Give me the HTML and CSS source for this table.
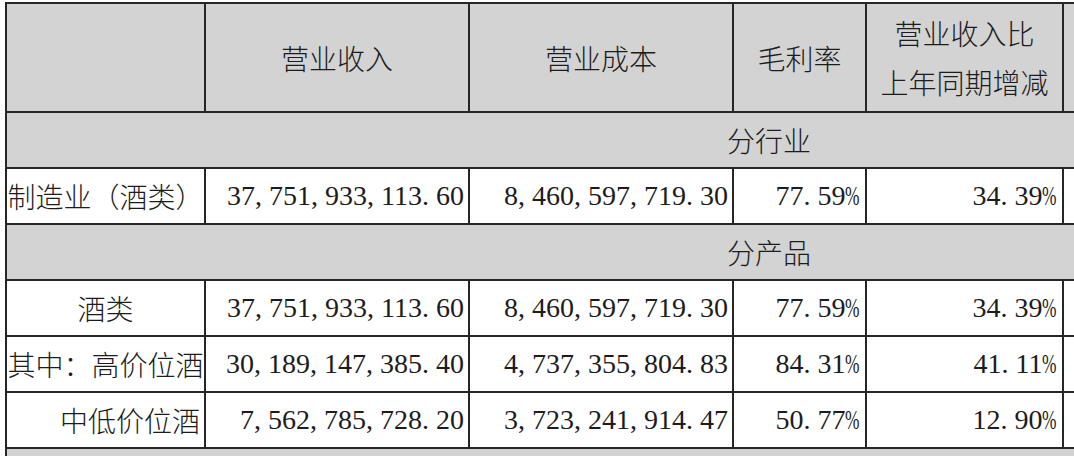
FILE: index.html
```html
<!DOCTYPE html>
<html lang="zh-CN">
<head>
<meta charset="utf-8">
<title>营业收入表</title>
<link rel="stylesheet" href="styles.css">
</head>
<body>
<div class="sheet">
  <div class="cell head"></div>
  <div class="cell head">营业收入</div>
  <div class="cell head">营业成本</div>
  <div class="cell head">毛利率</div>
  <div class="cell head two">营业收入比<br>上年同期增减</div>
  <div class="cell head"></div>

  <div class="cell section">分行业</div>

  <div class="cell label">制造业（酒类）</div>
  <div class="cell num">37<span class="p">,</span>751<span class="p">,</span>933<span class="p">,</span>113<span class="p">.</span>60</div>
  <div class="cell num">8<span class="p">,</span>460<span class="p">,</span>597<span class="p">,</span>719<span class="p">.</span>30</div>
  <div class="cell num pct">77<span class="p">.</span>59<span class="pc">%</span></div>
  <div class="cell num pct">34<span class="p">.</span>39<span class="pc">%</span></div>
  <div class="cell blank"></div>

  <div class="cell section">分产品</div>

  <div class="cell label">酒类</div>
  <div class="cell num">37<span class="p">,</span>751<span class="p">,</span>933<span class="p">,</span>113<span class="p">.</span>60</div>
  <div class="cell num">8<span class="p">,</span>460<span class="p">,</span>597<span class="p">,</span>719<span class="p">.</span>30</div>
  <div class="cell num pct">77<span class="p">.</span>59<span class="pc">%</span></div>
  <div class="cell num pct">34<span class="p">.</span>39<span class="pc">%</span></div>
  <div class="cell blank"></div>

  <div class="cell label">其中：高价位酒</div>
  <div class="cell num">30<span class="p">,</span>189<span class="p">,</span>147<span class="p">,</span>385<span class="p">.</span>40</div>
  <div class="cell num">4<span class="p">,</span>737<span class="p">,</span>355<span class="p">,</span>804<span class="p">.</span>83</div>
  <div class="cell num pct">84<span class="p">.</span>31<span class="pc">%</span></div>
  <div class="cell num pct">41<span class="p">.</span>11<span class="pc">%</span></div>
  <div class="cell blank"></div>

  <div class="cell label right">中低价位酒</div>
  <div class="cell num">7<span class="p">,</span>562<span class="p">,</span>785<span class="p">,</span>728<span class="p">.</span>20</div>
  <div class="cell num">3<span class="p">,</span>723<span class="p">,</span>241<span class="p">,</span>914<span class="p">.</span>47</div>
  <div class="cell num pct">50<span class="p">.</span>77<span class="pc">%</span></div>
  <div class="cell num pct">12<span class="p">.</span>90<span class="pc">%</span></div>
  <div class="cell blank"></div>

  <div class="cell section"></div>
</div>
</body>
</html>
```

FILE: styles.css
```css
html, body {
  margin: 0;
  padding: 0;
  background: #ffffff;
  overflow: hidden;
}

.sheet {
  margin: 2px 0 0 5px;
  width: 1526px;
  box-sizing: border-box;
  display: grid;
  grid-template-columns: 199px 264px 264px 133px 197px 467px;
  grid-template-rows: 109px;
  grid-auto-rows: 56px;
  border-top: 2px solid #262626;
  border-left: 2px solid #262626;
  color: #1c1c1c;
  font-family: "Noto Sans CJK SC", "Noto Sans CJK JP", sans-serif;
  font-size: 28px;
  font-weight: 300;
}

.cell {
  box-sizing: border-box;
  border-right: 2px solid #262626;
  border-bottom: 2px solid #262626;
  display: flex;
  align-items: center;
  justify-content: center;
  background: #ffffff;
  white-space: nowrap;
  line-height: 1;
}

.head {
  background: #d3d3d3;
}

.two {
  line-height: 49px;
  text-align: center;
}

.section {
  grid-column: 1 / -1;
  background: #d3d3d3;
  border-right: none;
}

.label {
  justify-content: center;
}

.label.right {
  justify-content: flex-end;
  padding-right: 4px;
}

.num {
  justify-content: flex-end;
  padding-right: 4px;
  font-family: "Liberation Serif", "Times New Roman", serif;
  font-weight: 400;
  font-size: 28px;
}

.pct {
  padding-right: 5px;
}

.p {
  display: inline-block;
  width: 0.5em;
  text-align: left;
}

.pc {
  display: inline-block;
  width: 0.52em;
  transform: scaleX(0.62);
  transform-origin: left center;
}
```
